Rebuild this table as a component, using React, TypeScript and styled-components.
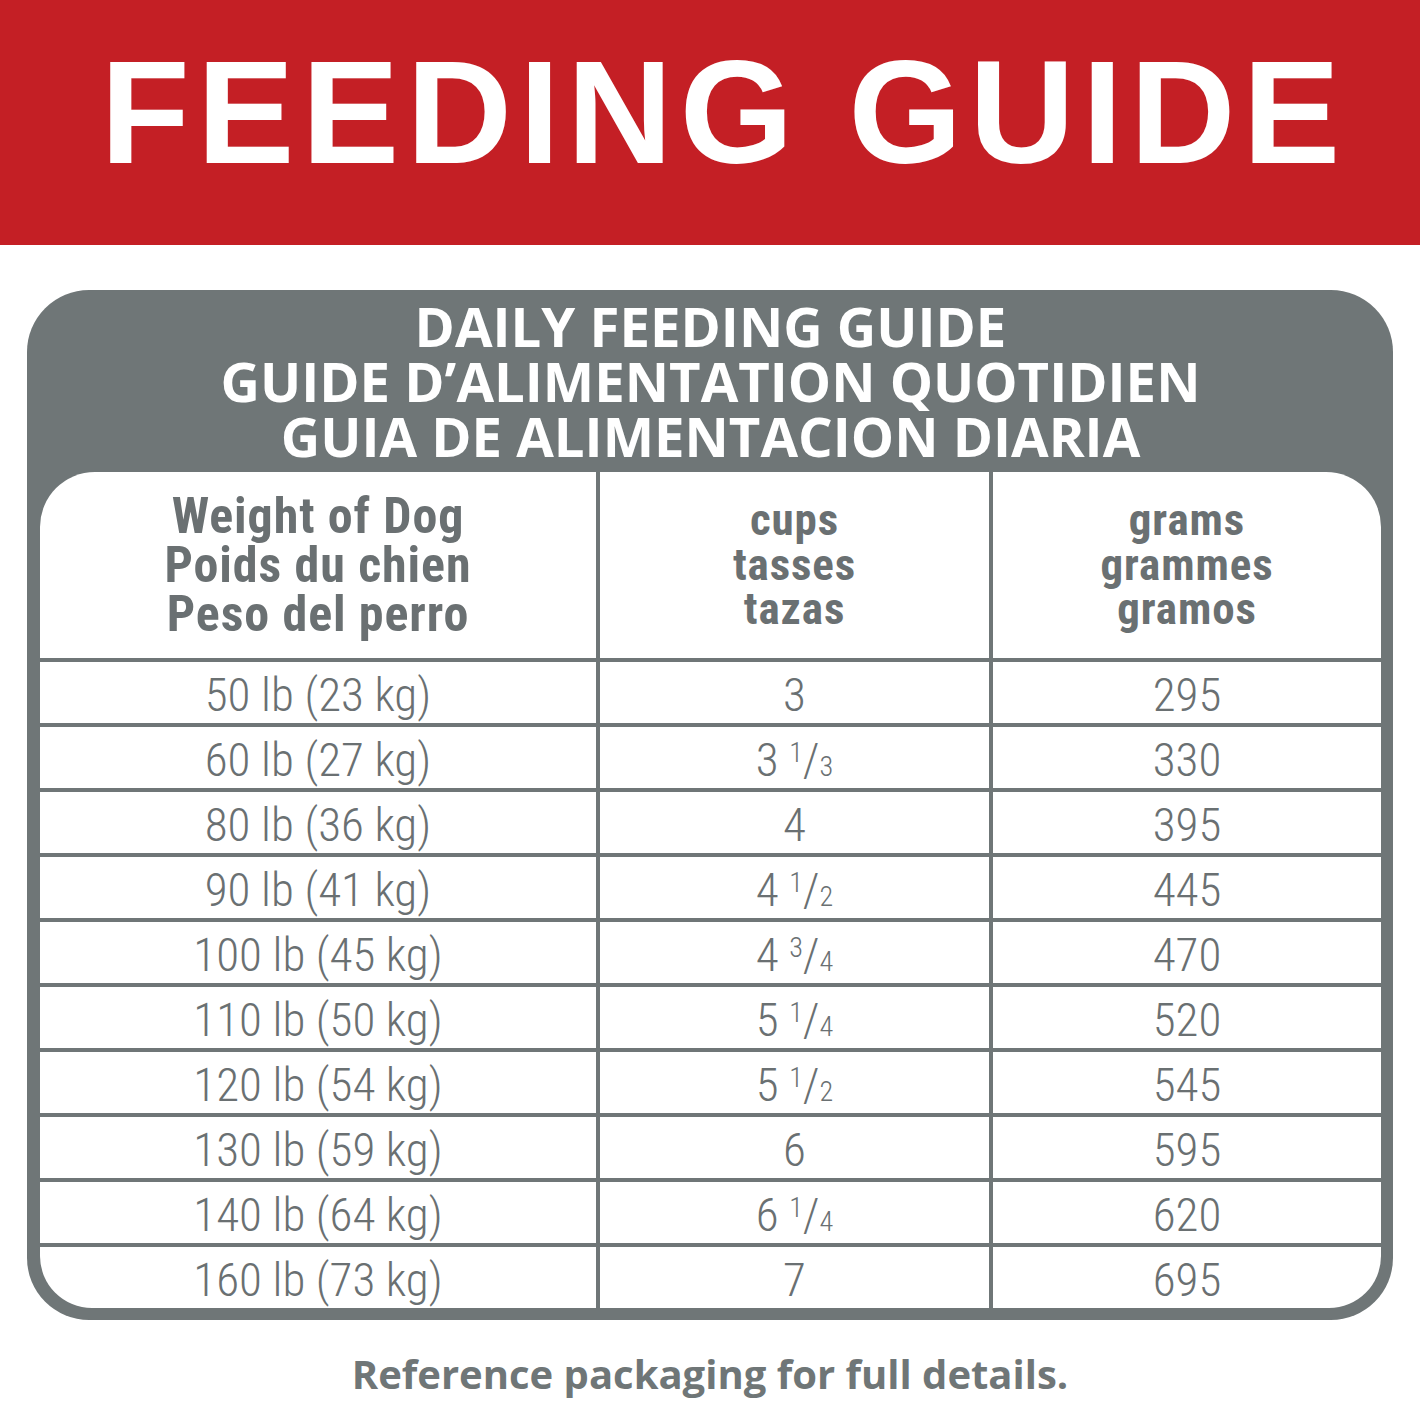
import React from "react";
import styled, { createGlobalStyle } from "styled-components";

const GlobalStyle = createGlobalStyle`
  html, body { margin: 0; padding: 0; background: #ffffff; }
  body { font-family: "Liberation Sans", Arial, sans-serif; }
`;

const GRAY = "#6f7677";
const TEXT = "#6a7072";
const RED = "#c41f25";

const Page = styled.div`
  width: 1420px;
  min-height: 1420px;
  background: #ffffff;
  display: flex;
  flex-direction: column;
`;

const Banner = styled.header`
  height: 245px;
  background: ${RED};
  display: flex;
  align-items: center;
  justify-content: center;
  padding: 0 0 20px 28px;
  box-sizing: border-box;
`;

const Title = styled.h1`
  margin: 0;
  font-family: "Liberation Sans", Arial, sans-serif;
  font-weight: 700;
  font-size: 146px;
  line-height: 1;
  letter-spacing: 7.3px;
  color: #ffffff;
`;

const Main = styled.main`
  padding: 45px 27px 0;
`;

const Panel = styled.section`
  background: ${GRAY};
  border-radius: 62px;
  padding: 0 12px 12px 13px;
`;

const PanelTitle = styled.div`
  height: 182px;
  display: flex;
  flex-direction: column;
  align-items: center;
  justify-content: center;
  font-family: "Open Sans", "Noto Sans", sans-serif;
  font-weight: 700;
  font-size: 54.5px;
  line-height: 55px;
  color: #ffffff;
  text-align: center;
  white-space: nowrap;
`;

const Table = styled.div`
  display: grid;
  grid-template-columns: 556px 389px 388px;
  grid-template-rows: 186px repeat(10, 61px);
  gap: 4px;
  background: ${GRAY};
  border-radius: 55px 55px 52px 52px;
`;

type Corner = "tl" | "tr" | "bl" | "br" | undefined;

const radiusFor = (c: Corner) => {
  switch (c) {
    case "tl":
      return "55px 0 0 0";
    case "tr":
      return "0 55px 0 0";
    case "bl":
      return "0 0 0 52px";
    case "br":
      return "0 0 52px 0";
    default:
      return "0";
  }
};

const Cell = styled.div<{ $corner?: Corner }>`
  background: #ffffff;
  display: flex;
  align-items: center;
  justify-content: center;
  border-radius: ${(p) => radiusFor(p.$corner)};
  color: ${TEXT};
  text-align: center;
`;

const HeadText = styled.div<{ $size: number; $lh: number }>`
  font-family: "Roboto Condensed", "DejaVu Sans Condensed", "Liberation Sans Narrow", "Roboto", sans-serif;
  font-weight: 700;
  font-size: ${(p) => p.$size}px;
  line-height: ${(p) => p.$lh}px;
  letter-spacing: 0.9px;
  white-space: nowrap;
`;

const DataText = styled.div`
  font-family: "Roboto Condensed", "Liberation Sans Narrow", "Roboto", sans-serif;
  font-weight: 300;
  font-size: 47px;
  line-height: 1;
  padding-top: 4px;
  white-space: nowrap;
`;

const Num = styled.span`
  font-size: 0.6em;
  vertical-align: 0.5em;
  line-height: 0;
`;

const Den = styled.span`
  font-size: 0.6em;
  line-height: 0;
`;

const Footer = styled.p`
  margin: 34px 0 0;
  text-align: center;
  font-family: "Open Sans", "Noto Sans", sans-serif;
  font-weight: 700;
  font-size: 40px;
  line-height: 40px;
  color: ${GRAY};
`;

const rows: [string, string, string, string][] = [
  ["50 lb (23 kg)", "3", "", "295"],
  ["60 lb (27 kg)", "3", "1/3", "330"],
  ["80 lb (36 kg)", "4", "", "395"],
  ["90 lb (41 kg)", "4", "1/2", "445"],
  ["100 lb (45 kg)", "4", "3/4", "470"],
  ["110 lb (50 kg)", "5", "1/4", "520"],
  ["120 lb (54 kg)", "5", "1/2", "545"],
  ["130 lb (59 kg)", "6", "", "595"],
  ["140 lb (64 kg)", "6", "1/4", "620"],
  ["160 lb (73 kg)", "7", "", "695"],
];

const Cups: React.FC<{ whole: string; frac: string }> = ({ whole, frac }) => {
  if (!frac) return <DataText>{whole}</DataText>;
  const [n, d] = frac.split("/");
  return (
    <DataText>
      {whole}{" "}
      <Num>{n}</Num>/<Den>{d}</Den>
    </DataText>
  );
};

export default function App() {
  return (
    <Page>
      <GlobalStyle />
      <Banner>
        <Title>FEEDING GUIDE</Title>
      </Banner>
      <Main>
        <Panel>
          <PanelTitle>
            <div>DAILY FEEDING GUIDE</div>
            <div>GUIDE D’ALIMENTATION QUOTIDIEN</div>
            <div>GUIA DE ALIMENTACION DIARIA</div>
          </PanelTitle>
          <Table>
            <Cell $corner="tl">
              <HeadText $size={50} $lh={49}>
                Weight of Dog
                <br />
                Poids du chien
                <br />
                Peso del perro
              </HeadText>
            </Cell>
            <Cell>
              <HeadText $size={45} $lh={44.5}>
                cups
                <br />
                tasses
                <br />
                tazas
              </HeadText>
            </Cell>
            <Cell $corner="tr">
              <HeadText $size={45} $lh={44.5}>
                grams
                <br />
                grammes
                <br />
                gramos
              </HeadText>
            </Cell>
            {rows.map((r, i) => {
              const last = i === rows.length - 1;
              return (
                <React.Fragment key={r[0]}>
                  <Cell $corner={last ? "bl" : undefined}>
                    <DataText>{r[0]}</DataText>
                  </Cell>
                  <Cell>
                    <Cups whole={r[1]} frac={r[2]} />
                  </Cell>
                  <Cell $corner={last ? "br" : undefined}>
                    <DataText>{r[3]}</DataText>
                  </Cell>
                </React.Fragment>
              );
            })}
          </Table>
        </Panel>
        <Footer>Reference packaging for full details.</Footer>
      </Main>
    </Page>
  );
}
